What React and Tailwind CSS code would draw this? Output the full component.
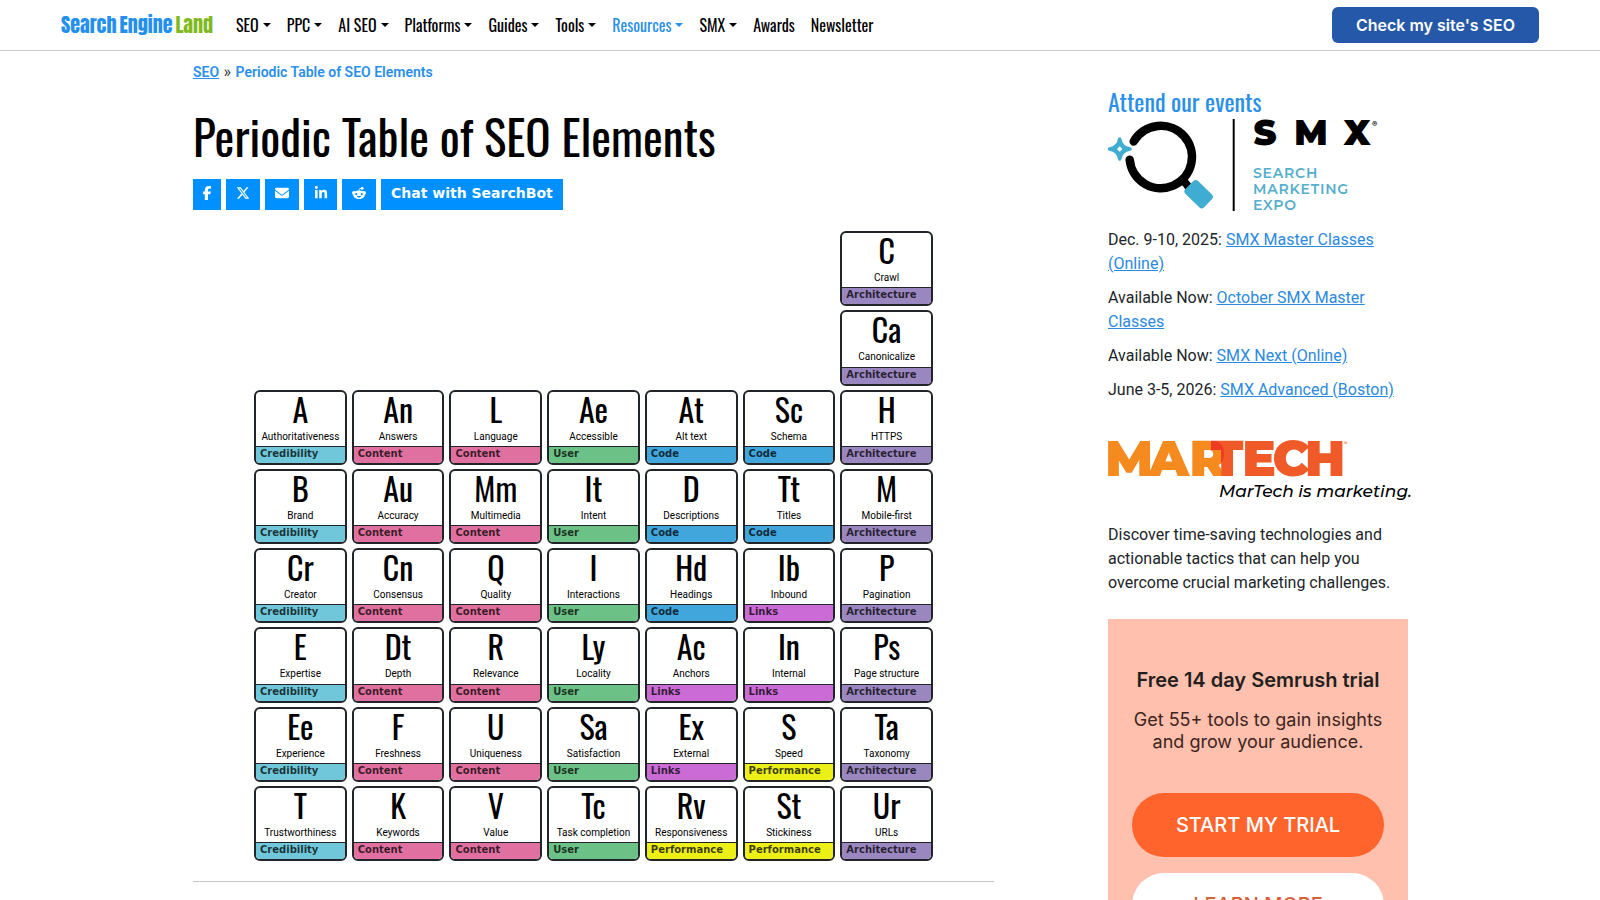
import { FaFacebookF, FaXTwitter, FaEnvelope, FaLinkedinIn, FaRedditAlien } from "react-icons/fa6";

const NAV = [
  ["SEO", true],
  ["PPC", true],
  ["AI SEO", true],
  ["Platforms", true],
  ["Guides", true],
  ["Tools", true],
  ["Resources", true],
  ["SMX", true],
  ["Awards", false],
  ["Newsletter", false],
];

const FILL = {
  Architecture: "bg-[#9b87c0]",
  Credibility: "bg-[#6fc7d9]",
  Content: "bg-[#e0709f]",
  User: "bg-[#6cc186]",
  Code: "bg-[#41a6dc]",
  Links: "bg-[#cb6cd6]",
  Performance: "bg-[#edf017]",
};

const ROWS = [
  [null, null, null, null, null, null, ["C", "Crawl", "Architecture"]],
  [null, null, null, null, null, null, ["Ca", "Canonicalize", "Architecture"]],
  [["A", "Authoritativeness", "Credibility"], ["An", "Answers", "Content"], ["L", "Language", "Content"], ["Ae", "Accessible", "User"], ["At", "Alt text", "Code"], ["Sc", "Schema", "Code"], ["H", "HTTPS", "Architecture"]],
  [["B", "Brand", "Credibility"], ["Au", "Accuracy", "Content"], ["Mm", "Multimedia", "Content"], ["It", "Intent", "User"], ["D", "Descriptions", "Code"], ["Tt", "Titles", "Code"], ["M", "Mobile-first", "Architecture"]],
  [["Cr", "Creator", "Credibility"], ["Cn", "Consensus", "Content"], ["Q", "Quality", "Content"], ["I", "Interactions", "User"], ["Hd", "Headings", "Code"], ["Ib", "Inbound", "Links"], ["P", "Pagination", "Architecture"]],
  [["E", "Expertise", "Credibility"], ["Dt", "Depth", "Content"], ["R", "Relevance", "Content"], ["Ly", "Locality", "User"], ["Ac", "Anchors", "Links"], ["In", "Internal", "Links"], ["Ps", "Page structure", "Architecture"]],
  [["Ee", "Experience", "Credibility"], ["F", "Freshness", "Content"], ["U", "Uniqueness", "Content"], ["Sa", "Satisfaction", "User"], ["Ex", "External", "Links"], ["S", "Speed", "Performance"], ["Ta", "Taxonomy", "Architecture"]],
  [["T", "Trustworthiness", "Credibility"], ["K", "Keywords", "Content"], ["V", "Value", "Content"], ["Tc", "Task completion", "User"], ["Rv", "Responsiveness", "Performance"], ["St", "Stickiness", "Performance"], ["Ur", "URLs", "Architecture"]],
];

const SHARE = [
  ["Share on Facebook", FaFacebookF, "w-7"],
  ["Share on X", FaXTwitter, "w-[34px]"],
  ["Share by email", FaEnvelope, "w-[34px]"],
  ["Share on LinkedIn", FaLinkedinIn, "w-[33px]"],
  ["Share on Reddit", FaRedditAlien, "w-[34px]"],
];

const EVENTS = [
  ["Dec. 9-10, 2025:", "SMX Master Classes (Online)"],
  ["Available Now:", "October SMX Master Classes"],
  ["Available Now:", "SMX Next (Online)"],
  ["June 3-5, 2026:", "SMX Advanced (Boston)"],
];

const condensed = "font-[Oswald,'Liberation_Sans_Narrow',sans-serif]";

function Header() {
  return (
    <header className="flex h-[51px] items-center border-b border-[#c9c9c9] px-[61px]">
      <a href="#" className="flex w-[148px] gap-[3px] font-[Anton,Oswald,'Liberation_Sans_Narrow',sans-serif] text-xl leading-8 font-normal whitespace-nowrap text-[#2490ee]">
        <span>Search</span>
        <span>Engine</span>
        <span className="text-[#80b921]">Land</span>
      </a>
      <nav className={`${condensed} ml-[19px] flex flex-1 text-base text-black`}>
        {NAV.map(([label, menu]) => (
          <a key={label} href="#" className={`flex items-center gap-1 px-2 whitespace-nowrap ${label === "Resources" ? "text-[#2a8fe8]" : ""}`}>
            {label}
            {menu && <span className="border-x-4 border-t-4 border-x-transparent border-t-current" />}
          </a>
        ))}
      </nav>
      <button type="button" className="h-9 rounded-md bg-[#2558a9] px-6 font-[Inter,sans-serif] text-base font-semibold text-white">
        Check my site's SEO
      </button>
    </header>
  );
}

function Element({ data }) {
  if (!data) return <div />;
  const [symbol, name, group] = data;
  return (
    <a href="#" className="flex flex-col rounded-md border-2 border-[#212529] text-black">
      <span className={`${condensed} text-center text-[32px] leading-[34px]`}>{symbol}</span>
      <span className="flex-1 pt-[2px] text-center text-[10px] leading-[18px] whitespace-nowrap">{name}</span>
      <span className={`rounded-b-sm border-t border-[#212529] pb-[2px] pl-1 font-['DejaVu_Sans',sans-serif] text-[10px] leading-[14px] font-bold text-black/75 ${FILL[group]}`}>
        {group}
      </span>
    </a>
  );
}

function SmxLogo() {
  return (
    <svg viewBox="0 0 300 96" className="block w-full overflow-visible" role="img" aria-label="SMX Search Marketing Expo">
      <path d="M25.700 25.500A31.200 31.200 0 1 1 21.700 43.700" fill="none" stroke="#000" strokeWidth="8.500" strokeLinecap="round" />
      <path d="M71 66L79 59Q78 64 87 71L80 78Q75 69 71 66Z" fill="#000" />
      <rect x="77.500" y="69.500" width="26" height="18" rx="3.500" fill="#3fadd1" transform="rotate(44 91 78.500)" />
      <path d="M11.700 23Q13 31.500 22 33Q13 34.500 11.700 43Q10.500 34.500 1.500 33Q10.500 31.500 11.700 23Z" fill="#3fadd1" stroke="#3fadd1" strokeWidth="3.500" strokeLinejoin="round" />
      <path d="M11.700 30.300L14.400 33L11.700 35.700L9 33Z" fill="#fff" />
      <path d="M125.700 3V95" stroke="#000" strokeWidth="2" />
      <g fontFamily="Montserrat, Lato, sans-serif" fontSize="35" fontWeight="900" textAnchor="middle">
        <text x="157" y="29">S</text>
        <text x="203" y="29">M</text>
        <text x="249" y="29">X</text>
      </g>
      <text x="264" y="11" fontFamily="Inter, sans-serif" fontSize="8" fontWeight="700">®</text>
      <g fontFamily="Montserrat, Lato, sans-serif" fontSize="14" fontWeight="600" fill="#55aecb" letterSpacing="0.800">
        <text x="145" y="62">SEARCH</text>
        <text x="145" y="78">MARKETING</text>
        <text x="145" y="94">EXPO</text>
      </g>
    </svg>
  );
}

function MartechLogo() {
  return (
    <svg viewBox="0 0 300 64" className="block w-full overflow-visible" role="img" aria-label="MarTech is marketing.">
      <g fontFamily="Montserrat, Lato, sans-serif" fontSize="50" fontWeight="900" textAnchor="middle" fill="#f58a1f">
        <text x="21" y="36">M</text>
        <text x="61" y="36">A</text>
        <text x="100" y="36">R</text>
      </g>
      <g fontFamily="Montserrat, Lato, sans-serif" fontSize="50" fontWeight="900" textAnchor="middle" fill="#f05a28">
        <text x="119" y="36">T</text>
        <text x="151" y="36">E</text>
        <text x="183" y="36">C</text>
        <text x="217" y="36">H</text>
      </g>
      <path d="M103 1H107Q116 3 116 13Q116 20 113 23V10H103Z" fill="#ef3a24" />
      <text x="236" y="5" fontFamily="Inter, sans-serif" fontSize="5" fill="#f05a28">®</text>
      <text x="111" y="57" fontFamily="Montserrat, Lato, sans-serif" fontSize="17" fontWeight="500" fontStyle="italic">MarTech is marketing.</text>
    </svg>
  );
}

function Sidebar() {
  return (
    <aside className="w-[300px] shrink-0 pt-9">
      <h2 className={`${condensed} text-2xl leading-[29px] text-[#2a8fe8]`}>Attend our events</h2>
      <SmxLogo />
      <ul className="mt-4 flex flex-col gap-[10px] text-base leading-6">
        {EVENTS.map(([when, title]) => (
          <li key={title}>
            {when} <a href="#" className="text-[#2b8ae0] underline">{title}</a>
          </li>
        ))}
      </ul>
      <div className="mt-[38px]">
        <MartechLogo />
      </div>
      <p className="mt-[19px] leading-6">
        Discover time-saving technologies and actionable tactics that can help you overcome crucial marketing challenges.
      </p>
      <section className="mt-6 flex flex-col bg-[#ffc0ad] px-6 pt-[47px] pb-12 text-center font-[Inter,sans-serif]">
        <h3 className="text-xl leading-7 font-semibold text-[#231f20]">Free 14 day Semrush trial</h3>
        <p className="mt-[15px] text-lg leading-[22px] text-[#3d2420]">Get 55+ tools to gain insights and grow your audience.</p>
        <a href="#" className="mt-10 flex h-16 items-center justify-center rounded-full bg-[#ff642d] text-xl font-medium text-white">START MY TRIAL</a>
        <a href="#" className="mt-4 flex h-16 items-center justify-center rounded-full bg-white text-xl font-medium text-[#d9613a]">LEARN MORE</a>
      </section>
    </aside>
  );
}

export default function App() {
  return (
    <div className="h-screen overflow-hidden bg-white font-[Roboto,sans-serif] text-[#212529]">
      <Header />
      <div className="mx-auto flex max-w-[1216px] justify-between pl-px">
        <main className="w-[801px]">
          <div className="mt-[11px] text-sm leading-5 font-semibold text-[#2a8fe8]">
            <a href="#" className="underline">SEO</a> <span className="mx-px text-base leading-5 font-normal text-[#333]">»</span> Periodic Table of SEO Elements
          </div>
          <h1 className={`${condensed} mt-[21px] text-[47px] leading-[66px] text-black`}>Periodic Table of SEO Elements</h1>
          <div className="mt-[10px] flex gap-[5px]">
            {SHARE.map(([label, Icon, width]) => (
              <button key={label} type="button" aria-label={label} className={`flex h-[31px] items-center justify-center bg-[#0090ff] pb-1 text-sm text-white ${width}`}>
                <Icon />
              </button>
            ))}
            <button type="button" className="h-[31px] bg-[#0090ff] px-[10px] pb-1 font-['DejaVu_Sans',sans-serif] text-sm font-bold text-white">
              Chat with SearchBot
            </button>
          </div>
          <div className="mx-auto mt-[21px] grid h-[630px] w-[679px] grid-cols-7 grid-rows-8 gap-x-[5px] gap-y-1">
            {ROWS.flatMap((row, r) => row.map((data, c) => <Element key={`${r}-${c}`} data={data} />))}
          </div>
          <hr className="mt-5 border-[#c4c4c4]" />
        </main>
        <Sidebar />
      </div>
    </div>
  );
}
